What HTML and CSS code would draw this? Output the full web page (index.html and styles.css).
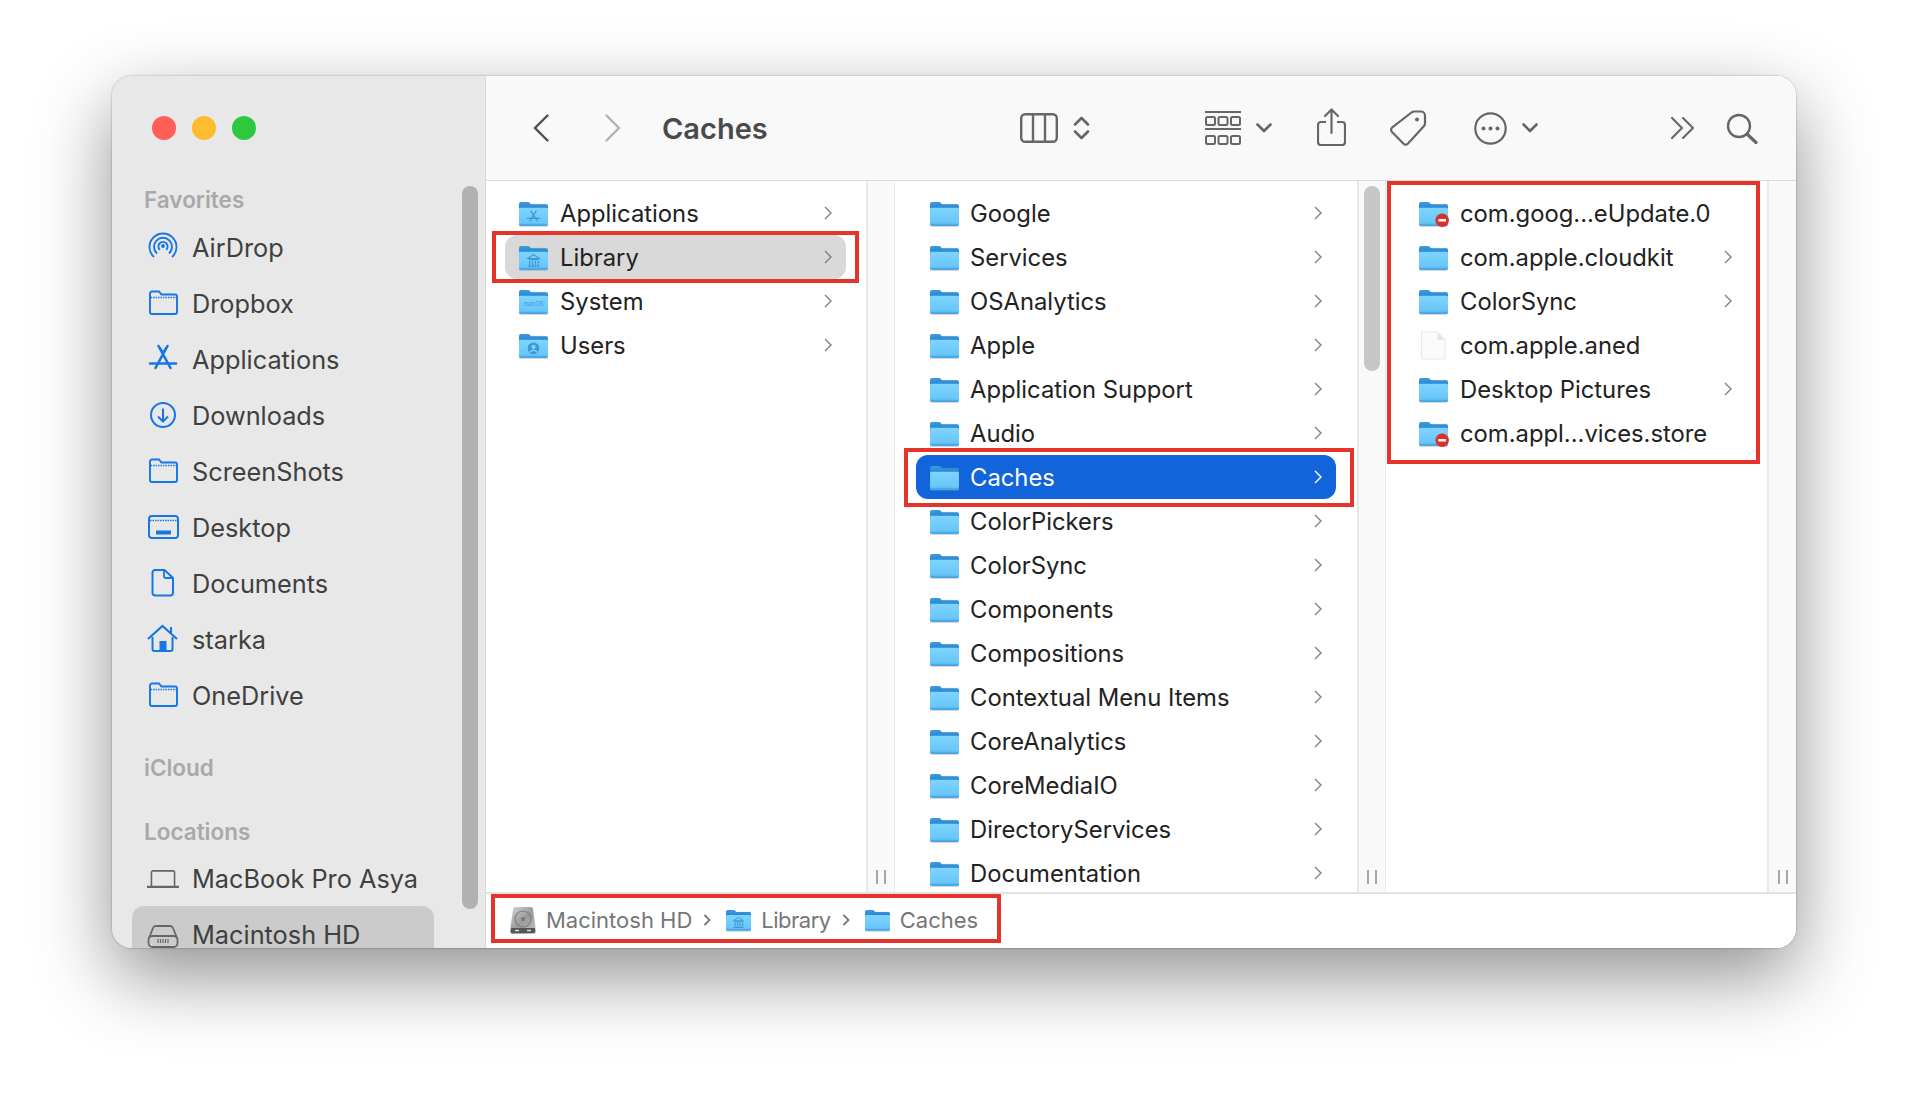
FILE: index.html
```html
<!DOCTYPE html>
<html lang="en">
<head>
<meta charset="utf-8">
<title>Caches</title>
<link rel="stylesheet" href="styles.css">
</head>
<body>
<svg class="defs" aria-hidden="true">
  <defs>
    <linearGradient id="tabG" x1="0" y1="0" x2="0" y2="1"><stop offset="0" stop-color="#3a9be2"/><stop offset="1" stop-color="#1d7cc8"/></linearGradient>
    <linearGradient id="bodyG" x1="0" y1="0" x2="0" y2="1"><stop offset="0" stop-color="#7ed5fe"/><stop offset="1" stop-color="#64c2f8"/></linearGradient>
    <linearGradient id="hdG" x1="0" y1="0" x2="1" y2="1"><stop offset="0" stop-color="#d8d8d8"/><stop offset=".5" stop-color="#9a9a9a"/><stop offset="1" stop-color="#c4c4c4"/></linearGradient>
    <symbol id="folder" viewBox="0 0 30 28" overflow="visible">
      <rect x="0" y="4" width="30" height="24" rx="2" fill="#8a8a8a" opacity=".35"/>
      <path d="M0 4a2 2 0 0 1 2-2h8l2.500 2.500h15.500a2 2 0 0 1 2 2V12H0z" fill="url(#tabG)"/>
      <path d="M0 9.500q0-1.500 1.500-1.500h27q1.500 0 1.500 1.500V25a2 2 0 0 1-2 2H2a2 2 0 0 1-2-2z" fill="url(#bodyG)"/>
      <path d="M0 24.500h30V25a2 2 0 0 1-2 2H2a2 2 0 0 1-2-2z" fill="#4aaae8"/>
    </symbol>
    <symbol id="g-app" viewBox="0 0 30 28" overflow="visible"><path d="M12 11l7 11M18 11l-7 11M8 19h14" fill="none" stroke="#3d97d8" stroke-width="1.300"/></symbol>
    <symbol id="g-lib" viewBox="0 0 30 28" overflow="visible"><path d="M9 15l6-4 6 4zM10 16h10M11 17v5M14 17v5M17 17v5M20 17v5M9 23h12" fill="none" stroke="#3d97d8" stroke-width="1.200"/></symbol>
    <symbol id="g-usr" viewBox="0 0 30 28" overflow="visible"><circle cx="15" cy="17" r="6" fill="#3d97d8"/><circle cx="15" cy="15.500" r="2.200" fill="#78d3fe"/><path d="M11 21q4-4 8 0" fill="none" stroke="#78d3fe" stroke-width="1.500"/></symbol>
    <symbol id="chev" viewBox="0 0 8 14"><path d="M1 1l6 6-6 6" fill="none" stroke="currentColor" stroke-width="1.400"/></symbol>
    <symbol id="tb-down" viewBox="0 0 16 10"><path d="M1.500 1.500L8 8l6.500-6.500" fill="none" stroke="currentColor" stroke-width="2.600" stroke-linecap="round" stroke-linejoin="round"/></symbol>
  </defs>
</svg>

<main class="window">
  <aside class="sidebar">
    <div class="lights"><span class="light red"></span><span class="light amber"></span><span class="light green"></span></div>
    <h2 class="side-head head-fav">Favorites</h2>
    <div class="side-row"><svg class="side-icon" viewBox="0 0 32 32"><path d="M7 26A13.500 13.500 0 1 1 25 26M10 22.500A9 9 0 1 1 22 22.500M12.800 18.800A4.600 4.600 0 1 1 19.200 18.800" fill="none" stroke="#1677e4" stroke-width="1.900"/><circle cx="16" cy="15" r="1.900" fill="#1677e4"/></svg><span>AirDrop</span></div>
    <div class="side-row"><svg class="side-icon" viewBox="0 0 32 32"><path d="M3 9V6.500a2 2 0 0 1 2-2h7l2.500 3H28a2 2 0 0 1 2 2V25a2 2 0 0 1-2 2H5a2 2 0 0 1-2-2z" fill="none" stroke="#1677e4" stroke-width="1.900"/><path d="M3.500 10.500h26" stroke="#1677e4" stroke-width="1.300" stroke-dasharray="1.500 1"/></svg><span>Dropbox</span></div>
    <div class="side-row"><svg class="side-icon" viewBox="0 0 32 32"><path d="M11.500 3l12 22M20.500 3l-12 22M3 20.500h26" fill="none" stroke="#1677e4" stroke-width="2.600" stroke-linecap="round"/><path d="M13 4.500L16 9.500 19 4.500" fill="none" stroke="#1677e4" stroke-width="1.500"/></svg><span>Applications</span></div>
    <div class="side-row"><svg class="side-icon" viewBox="0 0 32 32"><circle cx="16" cy="16" r="12" fill="none" stroke="#1677e4" stroke-width="2"/><path d="M16 9.500v13M11 17.500l5 5 5-5" fill="none" stroke="#1677e4" stroke-width="2"/></svg><span>Downloads</span></div>
    <div class="side-row"><svg class="side-icon" viewBox="0 0 32 32"><path d="M3 9V6.500a2 2 0 0 1 2-2h7l2.500 3H28a2 2 0 0 1 2 2V25a2 2 0 0 1-2 2H5a2 2 0 0 1-2-2z" fill="none" stroke="#1677e4" stroke-width="1.900"/><path d="M3.500 10.500h26" stroke="#1677e4" stroke-width="1.300" stroke-dasharray="1.500 1"/></svg><span>ScreenShots</span></div>
    <div class="side-row"><svg class="side-icon" viewBox="0 0 32 32"><rect x="2" y="5" width="29" height="22" rx="3" fill="none" stroke="#1677e4" stroke-width="2"/><path d="M3 9.500h27" stroke="#1677e4" stroke-width="1.300" stroke-dasharray="1.500 1"/><rect x="9" y="19.500" width="15" height="4" fill="#1677e4"/></svg><span>Desktop</span></div>
    <div class="side-row"><svg class="side-icon" viewBox="0 0 32 32"><path d="M8 3h9.500L26 11v15a2.500 2.500 0 0 1-2.500 2.500H8A2.500 2.500 0 0 1 5.500 26V5.500A2.500 2.500 0 0 1 8 3z" fill="none" stroke="#1677e4" stroke-width="2"/><path d="M17 3.500V9a2 2 0 0 0 2 2h6.500" fill="none" stroke="#1677e4" stroke-width="1.800"/></svg><span>Documents</span></div>
    <div class="side-row"><svg class="side-icon" viewBox="0 0 32 32"><path d="M1 16L15.500 3 30 16" fill="none" stroke="#1677e4" stroke-width="2.200"/><path d="M5.500 14v12a2 2 0 0 0 2 2h16a2 2 0 0 0 2-2V14M24 4v7" fill="none" stroke="#1677e4" stroke-width="2"/><rect x="12.500" y="18" width="7" height="10" fill="#1677e4"/></svg><span>starka</span></div>
    <div class="side-row"><svg class="side-icon" viewBox="0 0 32 32"><path d="M3 9V6.500a2 2 0 0 1 2-2h7l2.500 3H28a2 2 0 0 1 2 2V25a2 2 0 0 1-2 2H5a2 2 0 0 1-2-2z" fill="none" stroke="#1677e4" stroke-width="1.900"/><path d="M3.500 10.500h26" stroke="#1677e4" stroke-width="1.300" stroke-dasharray="1.500 1"/></svg><span>OneDrive</span></div>
    <h2 class="side-head head-icloud">iCloud</h2>
    <h2 class="side-head head-loc">Locations</h2>
    <div class="side-row"><svg class="side-icon wide" viewBox="0 0 36 32"><path d="M5 25V9.500A1.500 1.500 0 0 1 6.500 8h23A1.500 1.500 0 0 1 31 9.500V25" fill="none" stroke="#666" stroke-width="1.800"/><path d="M0 26h36" stroke="#666" stroke-width="2.600"/></svg><span>MacBook Pro Asya</span></div>
    <div class="side-row is-current"><svg class="side-icon" viewBox="0 0 32 32"><path d="M2 20l4-10a3 3 0 0 1 3-2h14a3 3 0 0 1 3 2l4 10" fill="none" stroke="#666" stroke-width="1.800"/><rect x="1.500" y="18" width="29" height="11" rx="4" fill="none" stroke="#666" stroke-width="1.800"/><path d="M11 21v4M13.500 21v4M16 21v4M18.500 21v4M21 21v4" stroke="#666" stroke-width="1.200"/></svg><span>Macintosh HD</span></div>
    <div class="side-thumb"></div>
  </aside>

  <section class="content">
    <header class="toolbar">
      <svg class="t-back" viewBox="0 0 16 28"><path d="M14.500 1.500L2 14l12.500 12.500" fill="none" stroke="#4f4f4f" stroke-width="2.400" stroke-linecap="round"/></svg>
      <svg class="t-forward" viewBox="0 0 16 28"><path d="M1.500 1.500L14 14 1.500 26.500" fill="none" stroke="#b2b2b2" stroke-width="2.400" stroke-linecap="round"/></svg>
      <h1 class="title">Caches</h1>
      <svg class="t-view" viewBox="0 0 38 30"><rect x="1.200" y="1.200" width="35.600" height="27.600" rx="4" fill="none" stroke="#666" stroke-width="2.400"/><path d="M13 1.500v27M25 1.500v27" stroke="#666" stroke-width="2.400"/></svg>
      <svg class="t-sort" viewBox="0 0 17 26"><path d="M2 9.500L8.500 3 15 9.500M2 16.500L8.500 23 15 16.500" fill="none" stroke="#666" stroke-width="2.600" stroke-linecap="round" stroke-linejoin="round"/></svg>
      <svg class="t-group" viewBox="0 0 36 35"><path d="M0 1h36M0 18h36" stroke="#666" stroke-width="2.200"/><g fill="none" stroke="#666" stroke-width="2"><rect x="1" y="6" width="9" height="8" rx="1.500"/><rect x="13.500" y="6" width="9" height="8" rx="1.500"/><rect x="26" y="6" width="9" height="8" rx="1.500"/><rect x="1" y="25" width="9" height="8" rx="1.500"/><rect x="13.500" y="25" width="9" height="8" rx="1.500"/><rect x="26" y="25" width="9" height="8" rx="1.500"/></g></svg>
      <svg class="t-caret"><use href="#tb-down"/></svg>
      <svg class="t-share" viewBox="0 0 29 38"><path d="M9 14H4a3 3 0 0 0-3 3v17a3 3 0 0 0 3 3h21a3 3 0 0 0 3-3V17a3 3 0 0 0-3-3h-5" fill="none" stroke="#666" stroke-width="2.200"/><path d="M14.500 25V2M8 8l6.500-6.500L21 8" fill="none" stroke="#666" stroke-width="2.200" stroke-linecap="round" stroke-linejoin="round"/></svg>
      <svg class="t-tag" viewBox="0 0 38 37"><path d="M25 1.500h7a4 4 0 0 1 4 4v8a4 4 0 0 1-1.200 2.800L18.800 33.800a3 3 0 0 1-4.300 0L3 22a3 3 0 0 1 0-4.300L22.500 2.500A4 4 0 0 1 25 1.500z" fill="none" stroke="#666" stroke-width="2.200"/><circle cx="28" cy="9.500" r="2" fill="#666"/></svg>
      <svg class="t-more" viewBox="0 0 33 33"><circle cx="16.500" cy="16.500" r="15.200" fill="none" stroke="#666" stroke-width="2.200"/><circle cx="9.500" cy="16.500" r="2" fill="#666"/><circle cx="16.500" cy="16.500" r="2" fill="#666"/><circle cx="23.500" cy="16.500" r="2" fill="#666"/></svg>
      <svg class="t-caret"><use href="#tb-down"/></svg>
      <svg class="t-overflow" viewBox="0 0 25 22"><path d="M2 1l10 10L2 21M13 1l10 10-10 10" fill="none" stroke="#666" stroke-width="2" stroke-linecap="round" stroke-linejoin="round"/></svg>
      <svg class="t-search" viewBox="0 0 32 31"><circle cx="13" cy="13" r="11" fill="none" stroke="#666" stroke-width="2.400"/><path d="M21 21l9 8.500" stroke="#666" stroke-width="3.200" stroke-linecap="round"/></svg>
    </header>

    <div class="columns">
      <div class="col col-1">
        <div class="row"><svg class="folder"><use href="#folder"/><use href="#g-app"/></svg><span class="name">Applications</span><svg class="chev"><use href="#chev"/></svg></div>
        <div class="row is-open"><svg class="folder"><use href="#folder"/><use href="#g-lib"/></svg><span class="name">Library</span><svg class="chev"><use href="#chev"/></svg></div>
        <div class="row"><svg class="folder" viewBox="0 0 30 28"><use href="#folder"/><text class="folder-label" x="15" y="19" text-anchor="middle">macOS</text></svg><span class="name">System</span><svg class="chev"><use href="#chev"/></svg></div>
        <div class="row"><svg class="folder"><use href="#folder"/><use href="#g-usr"/></svg><span class="name">Users</span><svg class="chev"><use href="#chev"/></svg></div>
      </div>
      <div class="strip"><i class="grip"></i><i class="grip"></i></div>

      <div class="col col-2">
        <div class="row"><svg class="folder"><use href="#folder"/></svg><span class="name">Google</span><svg class="chev"><use href="#chev"/></svg></div>
        <div class="row"><svg class="folder"><use href="#folder"/></svg><span class="name">Services</span><svg class="chev"><use href="#chev"/></svg></div>
        <div class="row"><svg class="folder"><use href="#folder"/></svg><span class="name">OSAnalytics</span><svg class="chev"><use href="#chev"/></svg></div>
        <div class="row"><svg class="folder"><use href="#folder"/></svg><span class="name">Apple</span><svg class="chev"><use href="#chev"/></svg></div>
        <div class="row"><svg class="folder"><use href="#folder"/></svg><span class="name">Application Support</span><svg class="chev"><use href="#chev"/></svg></div>
        <div class="row"><svg class="folder"><use href="#folder"/></svg><span class="name">Audio</span><svg class="chev"><use href="#chev"/></svg></div>
        <div class="row is-selected"><svg class="folder"><use href="#folder"/></svg><span class="name">Caches</span><svg class="chev"><use href="#chev"/></svg></div>
        <div class="row"><svg class="folder"><use href="#folder"/></svg><span class="name">ColorPickers</span><svg class="chev"><use href="#chev"/></svg></div>
        <div class="row"><svg class="folder"><use href="#folder"/></svg><span class="name">ColorSync</span><svg class="chev"><use href="#chev"/></svg></div>
        <div class="row"><svg class="folder"><use href="#folder"/></svg><span class="name">Components</span><svg class="chev"><use href="#chev"/></svg></div>
        <div class="row"><svg class="folder"><use href="#folder"/></svg><span class="name">Compositions</span><svg class="chev"><use href="#chev"/></svg></div>
        <div class="row"><svg class="folder"><use href="#folder"/></svg><span class="name">Contextual Menu Items</span><svg class="chev"><use href="#chev"/></svg></div>
        <div class="row"><svg class="folder"><use href="#folder"/></svg><span class="name">CoreAnalytics</span><svg class="chev"><use href="#chev"/></svg></div>
        <div class="row"><svg class="folder"><use href="#folder"/></svg><span class="name">CoreMediaIO</span><svg class="chev"><use href="#chev"/></svg></div>
        <div class="row"><svg class="folder"><use href="#folder"/></svg><span class="name">DirectoryServices</span><svg class="chev"><use href="#chev"/></svg></div>
        <div class="row"><svg class="folder"><use href="#folder"/></svg><span class="name">Documentation</span><svg class="chev"><use href="#chev"/></svg></div>
      </div>
      <div class="strip"><div class="col-thumb"></div><i class="grip"></i><i class="grip"></i></div>

      <div class="col col-3">
        <div class="row"><svg class="folder" viewBox="0 0 30 28"><use href="#folder"/><circle cx="24" cy="21" r="7" fill="#d8322a"/><rect x="20" y="19.700" width="8" height="2.600" fill="#fff"/></svg><span class="name">com.goog...eUpdate.0</span></div>
        <div class="row"><svg class="folder"><use href="#folder"/></svg><span class="name">com.apple.cloudkit</span><svg class="chev"><use href="#chev"/></svg></div>
        <div class="row"><svg class="folder"><use href="#folder"/></svg><span class="name">ColorSync</span><svg class="chev"><use href="#chev"/></svg></div>
        <div class="row"><svg class="folder" viewBox="0 0 30 28"><path d="M2.500 0H19l8 8v19a1 1 0 0 1-1 1H3.500a1 1 0 0 1-1-1z" fill="#fbfbfb" stroke="#e6e6e6"/><path d="M19 0v7a1 1 0 0 0 1 1h7z" fill="#e4e4e4"/></svg><span class="name">com.apple.aned</span></div>
        <div class="row"><svg class="folder"><use href="#folder"/></svg><span class="name">Desktop Pictures</span><svg class="chev"><use href="#chev"/></svg></div>
        <div class="row"><svg class="folder" viewBox="0 0 30 28"><use href="#folder"/><circle cx="24" cy="21" r="7" fill="#d8322a"/><rect x="20" y="19.700" width="8" height="2.600" fill="#fff"/></svg><span class="name">com.appl...vices.store</span></div>
      </div>
      <div class="strip"><i class="grip"></i><i class="grip"></i></div>
    </div>

    <footer class="pathbar">
      <svg class="path-hd" viewBox="0 0 26 27"><path d="M3 2a2 2 0 0 1 2-2h16a2 2 0 0 1 2 2l3 22a3 3 0 0 1-3 3H3a3 3 0 0 1-3-3z" fill="url(#hdG)"/><circle cx="13" cy="12" r="8" fill="none" stroke="#7d7d7d" stroke-width="1.200"/><circle cx="13" cy="12" r="2" fill="#777"/><rect x="1" y="21" width="24" height="5" rx="1" fill="#555"/><path d="M5 23.500h4M17 23.500h4" stroke="#ddd" stroke-width="1.500"/></svg>
      <span class="crumb">Macintosh HD</span>
      <svg class="sep" viewBox="0 0 8 12"><path d="M1.500 1l5 5-5 5" fill="none" stroke="#777" stroke-width="1.800"/></svg>
      <svg class="path-folder"><use href="#folder"/><use href="#g-lib"/></svg>
      <span class="crumb crumb-tight">Library</span>
      <svg class="sep" viewBox="0 0 8 12"><path d="M1.500 1l5 5-5 5" fill="none" stroke="#777" stroke-width="1.800"/></svg>
      <svg class="path-folder"><use href="#folder"/></svg>
      <span class="crumb">Caches</span>
    </footer>
  </section>

  <div class="mark mark-library"></div>
  <div class="mark mark-caches"></div>
  <div class="mark mark-contents"></div>
  <div class="mark mark-path"></div>
</main>
</body>
</html>
```

FILE: styles.css
```css
* { box-sizing: border-box; }
html, body { margin: 0; padding: 0; background: #fff; }
body { width: 1908px; height: 1096px; overflow: hidden; font-family: Inter, "Liberation Sans", sans-serif; }
.defs { position: absolute; width: 0; height: 0; }

.window {
  position: relative;
  display: flex;
  width: 1684px;
  height: 872px;
  margin: 76px 0 0 112px;
  border-radius: 20px;
  box-shadow: 0 28px 76px rgba(0, 0, 0, .44), 0 0 2px rgba(0, 0, 0, .4);
}

/* Sidebar */
.sidebar {
  position: relative;
  flex: none;
  width: 374px;
  height: 100%;
  overflow: hidden;
  padding-top: 40px;
  background: #e8e8e8;
  border-radius: 20px 0 0 20px;
  border-right: 1px solid #d8d8d8;
}
.lights { display: flex; gap: 16px; padding-left: 40px; margin-bottom: 45px; }
.light { width: 24px; height: 24px; border-radius: 50%; }
.red { background: #ff5f57; }
.amber { background: #febc2e; }
.green { background: #2cc840; }
.side-head { height: 30px; line-height: 30px; margin: 0; padding-left: 32px; font-size: 22.500px; font-weight: 600; color: #a9a9a9; }
.head-fav { margin-bottom: 4px; }
.head-icloud { margin-top: 30px; }
.head-loc { margin-top: 34px; margin-bottom: 3px; }
.side-row {
  display: flex;
  align-items: center;
  gap: 13px;
  width: 302px;
  height: 56px;
  margin-left: 20px;
  padding-left: 15px;
  font-size: 25.300px;
  color: #404040;
  border-radius: 12px;
}
.is-current { background: #cbcbcb; }
.side-icon { flex: none; width: 32px; height: 32px; }
.side-thumb { position: absolute; left: 350px; top: 110px; width: 16px; height: 723px; border-radius: 8px; background: #b1b1b1; }

/* Toolbar */
.content { flex: 1; min-width: 0; display: flex; flex-direction: column; background: #fff; border-radius: 0 20px 20px 0; overflow: hidden; }
.toolbar { flex: none; display: flex; align-items: center; height: 105px; padding: 0 0 0 47px; background: #f9f9f9; border-bottom: 1.500px solid #dcdcdc; }
.toolbar svg { flex: none; }
.t-back { width: 16px; height: 28px; }
.t-forward { width: 16px; height: 28px; margin-left: 56px; }
.title { width: 358px; margin: 0 0 0 41px; font-size: 29px; font-weight: 600; color: #4a4a4a; }
.t-view { width: 38px; height: 30px; }
.t-sort { width: 17px; height: 26px; margin-left: 15px; }
.t-group { width: 36px; height: 35px; margin-left: 115px; }
.t-caret { width: 16px; height: 10px; margin-left: 15px; color: #666; }
.t-share { width: 29px; height: 38px; margin-left: 45px; margin-top: -3px; }
.t-tag { width: 38px; height: 37px; margin-left: 43px; }
.t-more { width: 33px; height: 33px; margin-left: 47px; }
.t-overflow { width: 25px; height: 22px; margin-left: 132px; }
.t-search { width: 32px; height: 31px; margin-left: 31px; }

/* Columns */
.columns { flex: 1; min-height: 0; display: flex; overflow: hidden; }
.col { flex: none; padding-top: 10px; overflow: hidden; }
.col-1 { width: 380px; padding-left: 19px; padding-right: 20px; }
.col-2 { width: 462px; padding-left: 21px; padding-right: 21px; }
.col-3 { width: 381px; padding-left: 19px; padding-right: 21px; }
.row { display: flex; align-items: center; height: 44px; padding: 0 14px; font-size: 23.800px; color: #222; border-radius: 12px; }
.col-1 .row { gap: 12px; }
.col-2 .row { gap: 11px; }
.col-3 .row { gap: 12px; }
.folder { flex: none; width: 29px; height: 27px; overflow: visible; }
.folder-label { font-size: 6px; fill: #3d97d8; }
.name { flex: 1; white-space: nowrap; }
.chev { flex: none; width: 8px; height: 14px; color: #808080; }
.is-open { background: #d9d9d9; }
.is-selected { background: #1164da; color: #fff; }
.is-selected .chev { color: #fff; }
.strip { position: relative; flex: none; display: flex; justify-content: center; align-items: flex-end; gap: 6px; width: 29px; padding-bottom: 8px; background: #f9f9f9; border-left: 2px solid #e9e9e9; border-right: 1px solid #e9e9e9; }
.strip:last-child { border-right: 0; }
.grip { width: 2px; height: 14px; background: #a8a8a8; }
.col-thumb { position: absolute; left: 5px; top: 5px; width: 16px; height: 185px; border-radius: 8px; background: #c6c6c6; }

/* Path bar */
.pathbar { flex: none; display: flex; align-items: center; height: 56px; padding: 0 0 2px 24px; font-size: 22px; color: #767676; background: #fff; border-top: 2px solid #e2e2e2; }
.path-hd { flex: none; width: 26px; height: 27px; margin-right: 10px; }
.crumb { white-space: nowrap; }
.crumb-tight { letter-spacing: -.5px; }
.sep { flex: none; width: 8px; height: 12px; margin: 0 15px 0 11px; }
.path-folder { flex: none; width: 25px; height: 24px; margin-right: 10px; overflow: visible; }

/* Red annotation boxes */
.mark { position: absolute; border: 4px solid #e5352a; pointer-events: none; }
.mark-library { left: 380px; top: 155px; width: 367px; height: 52px; }
.mark-caches { left: 792px; top: 372px; width: 450px; height: 59px; }
.mark-contents { left: 1275px; top: 105px; width: 373px; height: 283px; }
.mark-path { left: 379px; top: 818px; width: 510px; height: 49px; }
```
